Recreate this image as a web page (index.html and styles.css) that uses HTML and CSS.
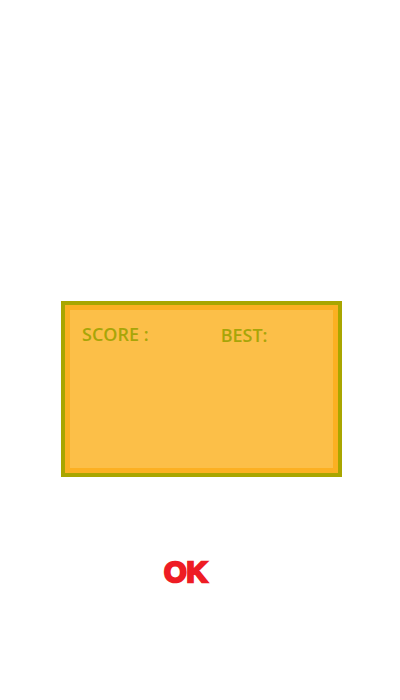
FILE: index.html
```html
<!DOCTYPE html>
<html>
<head>
<meta charset="utf-8">
<link rel="stylesheet" href="styles.css">
</head>
<body>
<div class="page">
  <div class="board">
    <div class="board-inner">
      <span class="label score">SCORE :</span>
      <span class="label best">BEST:</span>
    </div>
  </div>
  <div class="ok">OK</div>
</div>
</body>
</html>
```
FILE: styles.css
```css
html, body {
  margin: 0;
  padding: 0;
  background: #ffffff;
}
.page {
  width: 400px;
  height: 700px;
  padding-top: 301px;
  box-sizing: border-box;
}
.board {
  margin-left: 61px;
  width: 281px;
  height: 176px;
  box-sizing: border-box;
  border: 4px solid #a9a600;
  display: flex;
}
.board-inner {
  flex: 1;
  border: 5px solid #fcb022;
  background: #fcbf48;
  display: flex;
  align-items: flex-start;
  padding: 12px 0 0 12px;
}
.label {
  font-family: "Open Sans", sans-serif;
  font-weight: 600;
  font-size: 18px;
  color: #a8a508;
}
.best {
  margin-left: 72px;
  margin-top: 1px;
}
.ok {
  margin: 80px 0 0 164px;
  font-family: "Liberation Sans", Arial, sans-serif;
  font-weight: 700;
  font-size: 29px;
  line-height: 30px;
  color: #ee1c24;
  -webkit-text-stroke: 2.5px #ee1c24;
  letter-spacing: 0px;
}
```
